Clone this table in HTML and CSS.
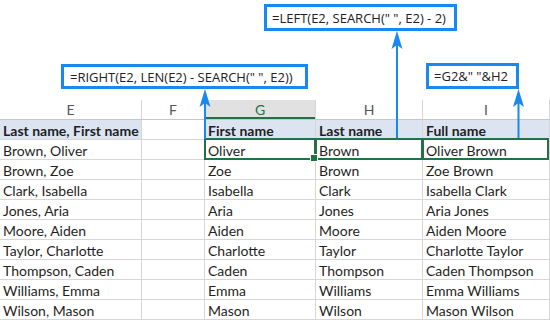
FILE: index.html
```html
<!DOCTYPE html>
<html>
<head>
<meta charset="utf-8">
<link rel="stylesheet" href="styles.css">
</head>
<body>
<div class="sheet">
  <div class="callouts">
    <div class="formula f-left">=LEFT(E2, SEARCH(" ", E2) - 2)</div>
    <div class="formula f-right">=RIGHT(E2, LEN(E2) - SEARCH(" ", E2))</div>
    <div class="formula f-concat">=G2&amp;" "&amp;H2</div>
  </div>
  <div class="grid">
    <div class="cell colhead">E</div>
    <div class="cell colhead">F</div>
    <div class="cell colhead active">G</div>
    <div class="cell colhead">H</div>
    <div class="cell colhead">I</div>

    <div class="cell band bold">Last name, First name</div>
    <div class="cell"></div>
    <div class="cell band bold">First name</div>
    <div class="cell band bold">Last name</div>
    <div class="cell band bold">Full name</div>

    <div class="cell">Brown, Oliver</div>
    <div class="cell"></div>
    <div class="cell sel sel-g">Oliver</div>
    <div class="cell sel sel-h">Brown</div>
    <div class="cell sel sel-i">Oliver Brown</div>

    <div class="cell">Brown, Zoe</div><div class="cell"></div><div class="cell">Zoe</div><div class="cell">Brown</div><div class="cell">Zoe Brown</div>
    <div class="cell">Clark, Isabella</div><div class="cell"></div><div class="cell">Isabella</div><div class="cell">Clark</div><div class="cell">Isabella Clark</div>
    <div class="cell">Jones, Aria</div><div class="cell"></div><div class="cell">Aria</div><div class="cell">Jones</div><div class="cell">Aria Jones</div>
    <div class="cell">Moore, Aiden</div><div class="cell"></div><div class="cell">Aiden</div><div class="cell">Moore</div><div class="cell">Aiden Moore</div>
    <div class="cell">Taylor, Charlotte</div><div class="cell"></div><div class="cell">Charlotte</div><div class="cell">Taylor</div><div class="cell">Charlotte Taylor</div>
    <div class="cell">Thompson, Caden</div><div class="cell"></div><div class="cell">Caden</div><div class="cell">Thompson</div><div class="cell">Caden Thompson</div>
    <div class="cell">Williams, Emma</div><div class="cell"></div><div class="cell">Emma</div><div class="cell">Williams</div><div class="cell">Emma Williams</div>
    <div class="cell">Wilson, Mason</div><div class="cell"></div><div class="cell">Mason</div><div class="cell">Wilson</div><div class="cell">Mason Wilson</div>
  </div>
  <svg class="arrows" width="550" height="320" viewBox="0 0 550 320">
    <g fill="#1a88f0" stroke="#1a88f0">
      <line x1="205" y1="102" x2="205" y2="139" stroke-width="2"/>
      <path d="M205 89 L210.5 107 L205 103 L199.5 107 Z" stroke="none"/>
      <line x1="397" y1="45" x2="397" y2="138" stroke-width="2"/>
      <path d="M397 31 L402.5 49 L397 45 L391.5 49 Z" stroke="none"/>
      <line x1="518.5" y1="103" x2="518.5" y2="138" stroke-width="2"/>
      <path d="M518.5 89 L524 107 L518.5 103 L513 107 Z" stroke="none"/>
    </g>
  </svg>
</div>
</body>
</html>
```
FILE: styles.css
```css
* { box-sizing: border-box; }
html, body { margin: 0; padding: 0; background: #fff; }
.sheet {
  position: relative;
  width: 550px;
  height: 320px;
  overflow: hidden;
  font-family: Lato, "Open Sans", sans-serif;
  color: #1f1f24;
}
.callouts {
  position: relative;
  height: 100px;
}
.formula {
  position: absolute;
  display: flex;
  align-items: center;
  padding-left: 5px;
  border: 3px solid #1a88f0;
  background: #fff;
  font-family: "Open Sans", sans-serif;
  font-size: 13px;
  color: #222;
  white-space: nowrap;
}
.f-left { left: 264px; top: 4px; width: 193px; height: 27px; }
.f-right { left: 61px; top: 64px; width: 247px; height: 25px; padding-left: 6px; }
.f-concat { left: 426px; top: 63px; width: 93px; height: 26px; }

.grid {
  display: grid;
  grid-template-columns: 142px 63px 111px 107px 127px;
  grid-auto-rows: 20px;
}
.cell {
  position: relative;
  display: flex;
  align-items: center;
  padding: 1px 0 0 3px;
  border-right: 1px solid #d6d6d6;
  border-bottom: 1px solid #d6d6d6;
  font-size: 14px;
  white-space: nowrap;
}
.colhead {
  justify-content: center;
  padding: 0;
  color: #555;
  font-size: 14px;
  border-bottom-color: #c6c6c6;
}
.colhead.active {
  background: #e1e1e1;
  color: #217346;
  box-shadow: inset 0 -2px 0 #217346;
}
.band { background: #dce4f2; }
.bold { font-weight: 700; }

.sel::after {
  content: "";
  position: absolute;
  top: -2px;
  bottom: -1px;
  left: -1px;
  right: -1px;
  border: 2px solid #217346;
  pointer-events: none;
}
.sel-g::after { left: -1px; }
.sel-i::after { right: 0; }
.sel-g::before {
  content: "";
  position: absolute;
  right: -3px;
  bottom: -3px;
  width: 6px;
  height: 6px;
  background: #217346;
  border: 1px solid #fff;
  z-index: 2;
}

.arrows {
  position: absolute;
  left: 0;
  top: 0;
  pointer-events: none;
}
```
